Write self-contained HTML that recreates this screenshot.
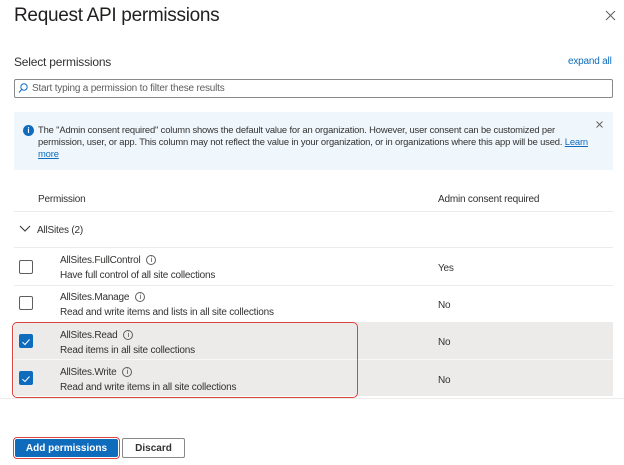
<!DOCTYPE html>
<html><head><meta charset="utf-8"><style>
*{margin:0;padding:0;box-sizing:border-box}
body{width:624px;height:465px;background:#fff;font-family:"Liberation Sans",sans-serif;color:#323130;position:relative;overflow:hidden}
.a{position:absolute;white-space:nowrap}
.t{font-size:10px;letter-spacing:-0.2px;padding-top:2px}
.hr{position:absolute;left:14px;width:599px;height:1px;background:#edebe9}
.cb{position:absolute;left:19px;width:14px;height:14px;border:1px solid #605e5c;border-radius:2px;background:#fff}
.cb.on{background:#0f6cbd;border-color:#0f6cbd}
.info{display:inline-block;width:10px;height:10px;border:1px solid #605e5c;border-radius:50%;font-size:7px;text-align:center;line-height:9px;margin-left:6px;vertical-align:1px}
</style></head><body>
<div class="a" style="left:14px;top:5px;font-size:19px;color:#201f1e;letter-spacing:-0.3px">Request API permissions</div>
<svg class="a" style="left:605px;top:10px" width="11" height="11" viewBox="0 0 11 11"><path d="M1 1L10 10M10 1L1 10" stroke="#605e5c" stroke-width="1"/></svg>
<div class="a" style="left:14px;top:55px;font-size:12px;letter-spacing:-0.2px">Select permissions</div>
<div class="a t" style="left:568px;top:54px;color:#0f6cbd">expand all</div>
<div class="a" style="left:14px;top:79px;width:599px;height:19px;border:1px solid #8a8886;border-radius:2px"></div>
<svg class="a" style="left:18px;top:83px" width="10" height="11" viewBox="0 0 10 11"><circle cx="6" cy="4" r="3.2" fill="none" stroke="#0f6cbd" stroke-width="1"/><path d="M3.8 6.3L1 9.5" stroke="#0f6cbd" stroke-width="1.1"/></svg>
<div class="a t" style="left:32px;top:81px;color:#605e5c">Start typing a permission to filter these results</div>
<div class="a" style="left:14px;top:112px;width:599px;height:58px;background:#eff6fc"></div>
<div class="a" style="left:23px;top:125px;width:11px;height:11px;border-radius:50%;background:#0f6cbd;color:#fff;font-size:8px;font-weight:bold;text-align:center;line-height:11px">i</div>
<div class="a" style="left:38px;top:124px;font-size:9.4px;line-height:12px;letter-spacing:-0.15px;color:#323130">The "Admin consent required" column shows the default value for an organization. However, user consent can be customized per<br>permission, user, or app. This column may not reflect the value in your organization, or in organizations where this app will be used. <span style="color:#0f6cbd;text-decoration:underline">Learn</span><br><span style="color:#0f6cbd;text-decoration:underline">more</span></div>
<svg class="a" style="left:596px;top:121px" width="7" height="7" viewBox="0 0 7 7"><path d="M0.5 0.5L6.5 6.5M6.5 0.5L0.5 6.5" stroke="#605e5c" stroke-width="0.9"/></svg>
<div class="a t" style="left:38px;top:192px">Permission</div>
<div class="a t" style="left:438px;top:192px">Admin consent required</div>
<div class="hr" style="top:211px"></div>
<svg class="a" style="left:19px;top:225px" width="12" height="8" viewBox="0 0 12 8"><path d="M1 1L6 6L11 1" fill="none" stroke="#323130" stroke-width="1"/></svg>
<div class="a t" style="left:37px;top:223px">AllSites (2)</div>
<div class="hr" style="top:247px"></div>

<div class="cb" style="top:260px"></div>
<div class="a t" style="left:60px;top:253px">AllSites.FullControl<span class="info">i</span></div>
<div class="a t" style="left:60px;top:268px">Have full control of all site collections</div>
<div class="a t" style="left:438px;top:261px">Yes</div>
<div class="hr" style="top:285px"></div>

<div class="cb" style="top:296px"></div>
<div class="a t" style="left:60px;top:290px">AllSites.Manage<span class="info">i</span></div>
<div class="a t" style="left:60px;top:305px">Read and write items and lists in all site collections</div>
<div class="a t" style="left:438px;top:298px">No</div>

<div class="a" style="left:14px;top:322px;width:599px;height:74px;background:#edebe9"></div>
<div class="a" style="left:14px;top:359px;width:599px;height:1px;background:#f8f8f8"></div>
<div class="cb on" style="top:334px"><svg width="12" height="12" viewBox="0 0 12 12"><path d="M2.5 6.2L5 8.5L9.5 3.5" fill="none" stroke="#fff" stroke-width="1"/></svg></div>
<div class="a t" style="left:60px;top:328px">AllSites.Read<span class="info">i</span></div>
<div class="a t" style="left:60px;top:343px">Read items in all site collections</div>
<div class="a t" style="left:438px;top:335px">No</div>
<div class="cb on" style="top:371px"><svg width="12" height="12" viewBox="0 0 12 12"><path d="M2.5 6.2L5 8.5L9.5 3.5" fill="none" stroke="#fff" stroke-width="1"/></svg></div>
<div class="a t" style="left:60px;top:365px">AllSites.Write<span class="info">i</span></div>
<div class="a t" style="left:60px;top:380px">Read and write items in all site collections</div>
<div class="a t" style="left:438px;top:373px">No</div>
<div class="a" style="left:12px;top:322px;width:346px;height:76px;border:1.5px solid #d9453a;border-radius:5px"></div>
<div class="hr" style="top:398px;left:0;width:624px"></div>

<div class="a" style="left:13px;top:437px;width:107px;height:22px;border:1.5px solid #d9453a;border-radius:4px"></div>
<div class="a" style="left:15px;top:439px;width:103px;height:18px;background:#0f6cbd;border-radius:2px;color:#fff;font-size:10px;font-weight:bold;text-align:center;line-height:19px">Add permissions</div>
<div class="a" style="left:122px;top:438px;width:63px;height:20px;border:1px solid #8a8886;border-radius:2px;font-size:10px;font-weight:bold;text-align:center;line-height:19px;color:#323130">Discard</div>
</body></html>
